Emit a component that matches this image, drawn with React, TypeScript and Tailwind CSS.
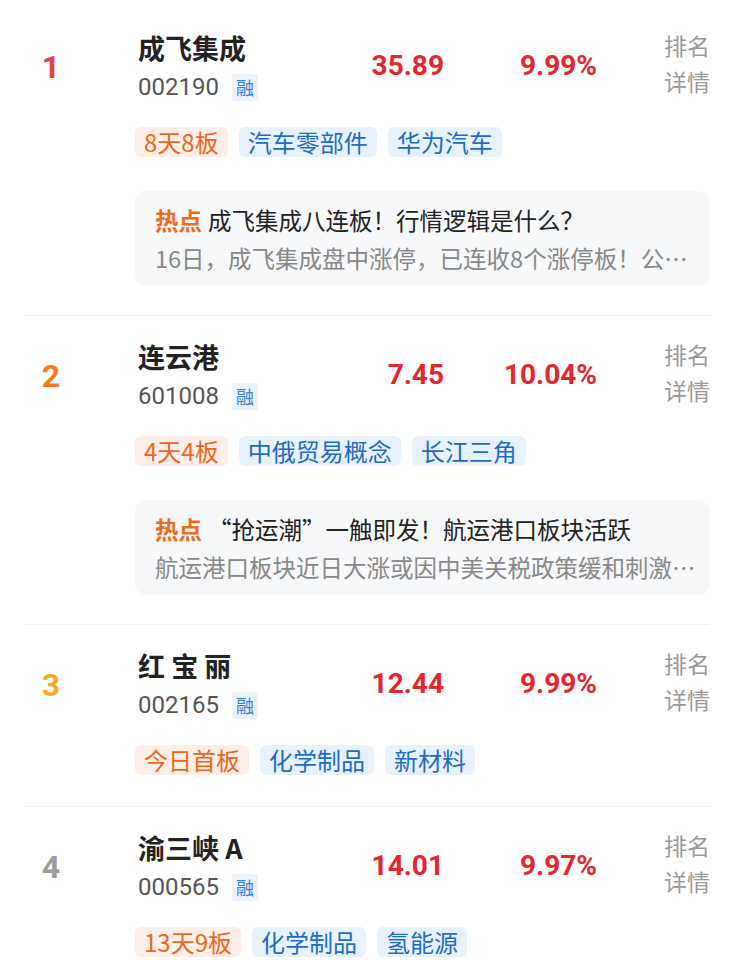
interface Tag {
  text: string;
  hot?: boolean;
}

interface StockRow {
  rank: number;
  name: string;
  code: string;
  price: string;
  pct: string;
  tags: Tag[];
  news?: { title: string; desc: string };
}

const RANK_COLORS: Record<number, string> = {
  1: "text-[#e8404a]",
  2: "text-[#f37a1f]",
  3: "text-[#f7a823]",
  4: "text-[#9b9b9b]",
};

const ROWS: StockRow[] = [
  {
    rank: 1,
    name: "成飞集成",
    code: "002190",
    price: "35.89",
    pct: "9.99%",
    tags: [{ text: "8天8板", hot: true }, { text: "汽车零部件" }, { text: "华为汽车" }],
    news: {
      title: "成飞集成八连板！行情逻辑是什么？",
      desc: "16日，成飞集成盘中涨停，已连收8个涨停板！公司近日公告称，公司股票交易价格连续多日涨幅偏离值累计达到异常波动标准",
    },
  },
  {
    rank: 2,
    name: "连云港",
    code: "601008",
    price: "7.45",
    pct: "10.04%",
    tags: [{ text: "4天4板", hot: true }, { text: "中俄贸易概念" }, { text: "长江三角" }],
    news: {
      title: "“抢运潮”一触即发！航运港口板块活跃",
      desc: "航运港口板块近日大涨或因中美关税政策缓和刺激了出口需求，抢运潮一触即发",
    },
  },
  {
    rank: 3,
    name: "红 宝 丽",
    code: "002165",
    price: "12.44",
    pct: "9.99%",
    tags: [{ text: "今日首板", hot: true }, { text: "化学制品" }, { text: "新材料" }],
  },
  {
    rank: 4,
    name: "渝三峡 A",
    code: "000565",
    price: "14.01",
    pct: "9.97%",
    tags: [{ text: "13天9板", hot: true }, { text: "化学制品" }, { text: "氢能源" }],
  },
];

const CJK = "font-['Noto_Sans_CJK_SC','Noto_Sans',sans-serif]";
const NUM = "font-['Roboto','Noto_Sans_CJK_SC',sans-serif]";

function Row({ row, last }: { row: StockRow; last: boolean }) {
  return (
    <div
      className={`flex pt-[22px] ${row.news ? "pb-[29px]" : "pb-[31px]"} ${
        last ? "" : "border-b border-[#f0f0f0]"
      }`}
    >
      {/* rank */}
      <div className="w-[54px] h-[78px] pb-[3px] flex items-center justify-center shrink-0">
        <span className={`${NUM} text-[32px] font-bold ${RANK_COLORS[row.rank]}`}>{row.rank}</span>
      </div>

      <div className="ml-[57px] flex-1 min-w-0">
        {/* header */}
        <div className="flex items-center h-[78px]">
          <div className="w-[215px] pl-[3px]">
            <div className={`${CJK} text-[27px] leading-[38px] font-bold text-[#222] whitespace-pre`}>
              {row.name}
            </div>
            <div className="flex items-center h-[40px]">
              <span className={`${NUM} text-[24px] text-[#555]`}>{row.code}</span>
              <span
                className={`${CJK} ml-[13px] w-[26px] h-[27px] flex items-center justify-center bg-[#eaf2fc] text-[#3a7ed6] text-[18px] rounded-[2px]`}
              >
                融
              </span>
            </div>
          </div>
          <div className={`${NUM} w-[94px] mb-[4px] text-right text-[28px] font-bold text-[#e5262c]`}>
            {row.price}
          </div>
          <div className={`${NUM} w-[153px] mb-[4px] text-right text-[28px] font-bold text-[#e5262c]`}>
            {row.pct}
          </div>
          <div className={`${CJK} ml-auto text-right text-[23px] leading-[36px] text-[#999] -mt-[10px]`}>
            <div>排名</div>
            <div>详情</div>
          </div>
        </div>

        {/* tags */}
        <div className="flex gap-[11px] mt-[20px]">
          {row.tags.map((t, i) => (
            <span
              key={i}
              className={`${CJK} h-[30px] leading-[30px] px-[9px] text-[24px] rounded-[6px] ${
                t.hot ? "bg-[#fdefe7] text-[#ef661c]" : "bg-[#e8f2fc] text-[#1f6cc6]"
              }`}
            >
              {t.text}
            </span>
          ))}
        </div>

        {/* hot news */}
        {row.news && (
          <div className="mt-[34px] bg-[#f7f8fa] rounded-[12px] pl-[20px] pr-[9px] pt-[10px] pb-[9px]">
            <div className={`${CJK} text-[23.5px] leading-[38px] text-[#222] truncate`}>
              <span className="font-bold text-[#f06a1d] mr-[6px]">热点</span>
              {row.news.title}
            </div>
            <div className={`${CJK} text-[23.5px] leading-[38px] text-[#888] truncate`}>{row.news.desc}</div>
          </div>
        )}
      </div>
    </div>
  );
}

export default function App() {
  return (
    <div className="w-[738px] h-[960px] overflow-hidden bg-white">
      <div className="mx-[24px] w-[686px] pt-[7px]">
        {ROWS.map((row, i) => (
          <Row key={row.rank} row={row} last={i === ROWS.length - 1} />
        ))}
      </div>
    </div>
  );
}
